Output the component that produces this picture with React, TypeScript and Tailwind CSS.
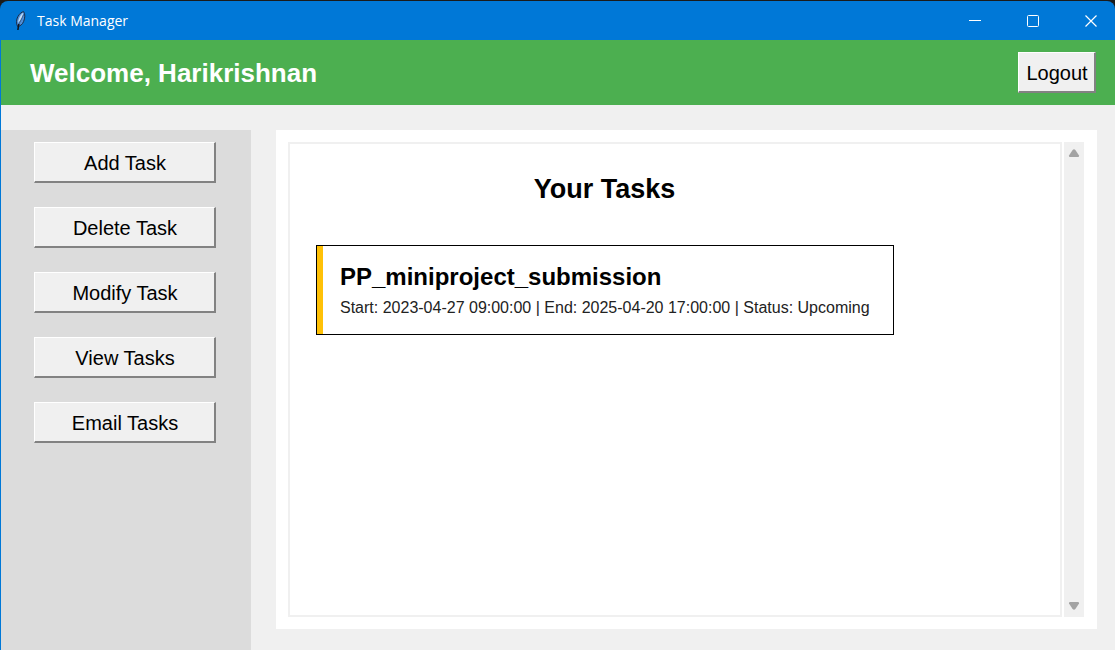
import type { ReactNode } from "react";

type Task = {
  title: string;
  start: string;
  end: string;
  status: string;
};

const actions = ["Add Task", "Delete Task", "Modify Task", "View Tasks", "Email Tasks"];

const tasks: Task[] = [
  {
    title: "PP_miniproject_submission",
    start: "2023-04-27 09:00:00",
    end: "2025-04-20 17:00:00",
    status: "Upcoming",
  },
];

function FeatherIcon() {
  return (
    <svg width="16" height="22" viewBox="0 0 16 22" aria-hidden="true">
      <path
        d="M4.600 16.500C3 13.500 3.200 9.500 5 6.400C6.400 4 8.400 2 10.600 1.600C12.400 4 12 8 10.600 11.500C9.400 14.500 7.400 16 4.600 16.500Z"
        fill="#4f8fd8"
        stroke="#1a2c48"
        strokeWidth="1"
      />
      <path d="M5.200 13C5 10 6.600 6 9.800 2.800C10.600 5 8.600 9.500 5.200 13Z" fill="#c2dcf5" />
      <path d="M10.600 4.500C9 8.500 7 11.500 5.400 15" stroke="#2b4a75" strokeWidth="0.800" fill="none" />
      <path d="M5.800 14L4.900 20" stroke="#10161f" strokeWidth="1.600" fill="none" />
    </svg>
  );
}

function CaptionButton({ label, children }: { label: string; children: ReactNode }) {
  return (
    <button type="button" aria-label={label} className="flex w-[58px] items-center justify-center text-white">
      <svg width="12" height="12" viewBox="0 0 12 12" fill="none" stroke="currentColor" aria-hidden="true">
        {children}
      </svg>
    </button>
  );
}

function RaisedButton({ label, className }: { label: string; className: string }) {
  return (
    <button
      type="button"
      className={
        "h-[41px] border-t border-r-2 border-b-2 border-l border-t-white border-r-[#828282] border-b-[#828282] border-l-white bg-[#f0f0f0] pt-[2px] pl-px text-[20px] leading-6 text-black " +
        className
      }
    >
      {label}
    </button>
  );
}

function TaskCard({ task }: { task: Task }) {
  return (
    <article className="flex w-fit min-w-[578px] border border-black bg-white">
      <div className="w-[6px] bg-[#ffc107]" />
      <div className="px-[17px] pt-4 pb-[14px]">
        <h3 className="text-[24px] leading-[30px] font-bold">{task.title}</h3>
        <p className="pt-1 text-[16px] leading-6 text-[#222222]">
          Start: {task.start} | End: {task.end} | Status: {task.status}
        </p>
      </div>
    </article>
  );
}

export default function App() {
  return (
    <div className="flex min-h-screen flex-col bg-[#1b1b1b] pt-px font-['Liberation_Sans',Arial,sans-serif] text-black">
      <div className="flex grow flex-col overflow-hidden rounded-t-lg bg-[#0078d7] pl-px">
        <div className="flex h-[39px] items-stretch justify-between pl-3">
          <div className="flex items-center gap-2">
            <FeatherIcon />
            <span className="font-['Open_Sans','Noto_Sans',sans-serif] text-[14px] leading-5 text-white">
              Task Manager
            </span>
          </div>
          <div className="-mr-[5px] flex">
            <CaptionButton label="Minimize">
              <path d="M0 5.500H12" />
            </CaptionButton>
            <CaptionButton label="Maximize">
              <rect x="0.500" y="0.500" width="11" height="11" rx="1" />
            </CaptionButton>
            <CaptionButton label="Close">
              <path d="M0.500 0.500L11.500 11.500M11.500 0.500L0.500 11.500" strokeWidth="1.200" />
            </CaptionButton>
          </div>
        </div>

        <header className="flex h-[65px] items-center justify-between bg-[#4caf50] pr-[19px] pl-[29px]">
          <h1 className="text-[26px] leading-8 font-bold text-white">Welcome, Harikrishnan</h1>
          <RaisedButton label="Logout" className="w-[78px]" />
        </header>

        <div className="flex grow gap-[25px] bg-[#f0f0f0] pt-[25px] pr-[18px]">
          <nav className="flex w-[250px] shrink-0 flex-col items-center gap-6 bg-[#dcdcdc] pt-3 pr-[2px]">
            {actions.map((label) => (
              <RaisedButton key={label} label={label} className="w-[182px]" />
            ))}
          </nav>

          <main className="mb-[21px] flex grow gap-[2px] bg-white py-3 pr-[13px] pl-3">
            <section className="grow border-2 border-[#f0f0f0] px-[26px] pt-[29px]">
              <h2 className="pr-[141px] text-center text-[27px] leading-8 font-bold">Your Tasks</h2>
              <div className="flex flex-col gap-4 pt-10">
                {tasks.map((task) => (
                  <TaskCard key={task.title} task={task} />
                ))}
              </div>
            </section>
            <div className="flex w-5 flex-col items-center justify-between bg-[#f0f0f0] py-[6px]">
              <button type="button" aria-label="Scroll up">
                <svg width="12" height="10" viewBox="0 0 12 10" className="block" aria-hidden="true">
                  <path d="M4.600 2Q6 0.600 7.400 2L11 7.500Q11.200 9 10.200 9H1.800Q0.800 9 1 7.500Z" fill="#a3a3a3" />
                </svg>
              </button>
              <button type="button" aria-label="Scroll down">
                <svg width="12" height="10" viewBox="0 0 12 10" className="block" aria-hidden="true">
                  <path d="M4.600 8Q6 9.400 7.400 8L11 2.500Q11.200 1 10.200 1H1.800Q0.800 1 1 2.500Z" fill="#a3a3a3" />
                </svg>
              </button>
            </div>
          </main>
        </div>
      </div>
    </div>
  );
}
